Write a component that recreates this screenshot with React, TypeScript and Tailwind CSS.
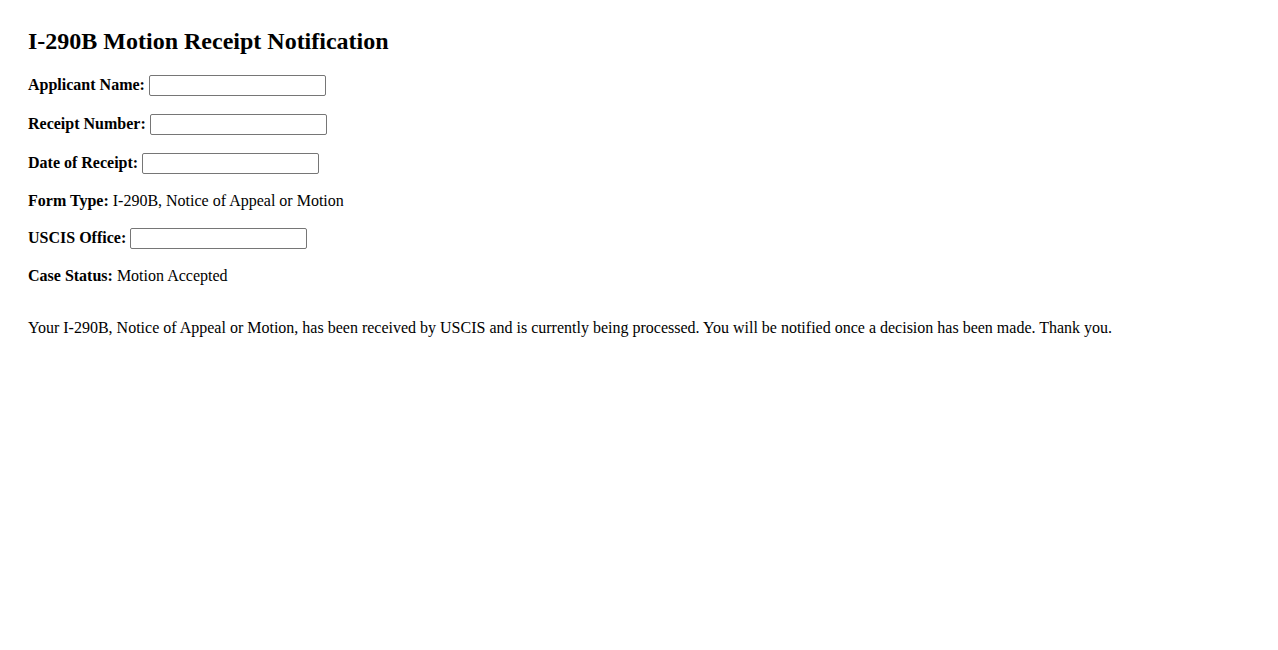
export default function App() {
  const inputCls =
    "w-[177px] h-[21px] border border-[#767676] rounded-[2px] px-[2px] py-[1px] bg-white align-baseline text-[13.33px] font-['Liberation_Sans',sans-serif]";
  return (
    <div className="min-h-screen bg-white px-[28px] pt-[28px] font-['Liberation_Serif',serif] text-[16px] leading-[normal] text-black">
      <h2 className="mb-[20px] text-[24px] font-bold">I-290B Motion Receipt Notification</h2>
      <p className="my-[18px]">
        <label className="font-bold">Applicant Name:</label> <input type="text" className={inputCls} />
      </p>
      <p className="my-[18px]">
        <label className="font-bold">Receipt Number:</label> <input type="text" className={inputCls} />
      </p>
      <p className="my-[18px]">
        <label className="font-bold">Date of Receipt:</label> <input type="text" className={inputCls} />
      </p>
      <p className="my-[18px]">
        <span className="font-bold">Form Type:</span> I-290B, Notice of Appeal or Motion
      </p>
      <p className="my-[18px]">
        <label className="font-bold">USCIS Office:</label> <input type="text" className={inputCls} />
      </p>
      <p className="my-[18px]">
        <span className="font-bold">Case Status:</span> Motion Accepted
      </p>
      <p className="mt-[34px]">
        Your I-290B, Notice of Appeal or Motion, has been received by USCIS and is currently being processed. You
        will be notified once a decision has been made. Thank you.
      </p>
    </div>
  );
}
